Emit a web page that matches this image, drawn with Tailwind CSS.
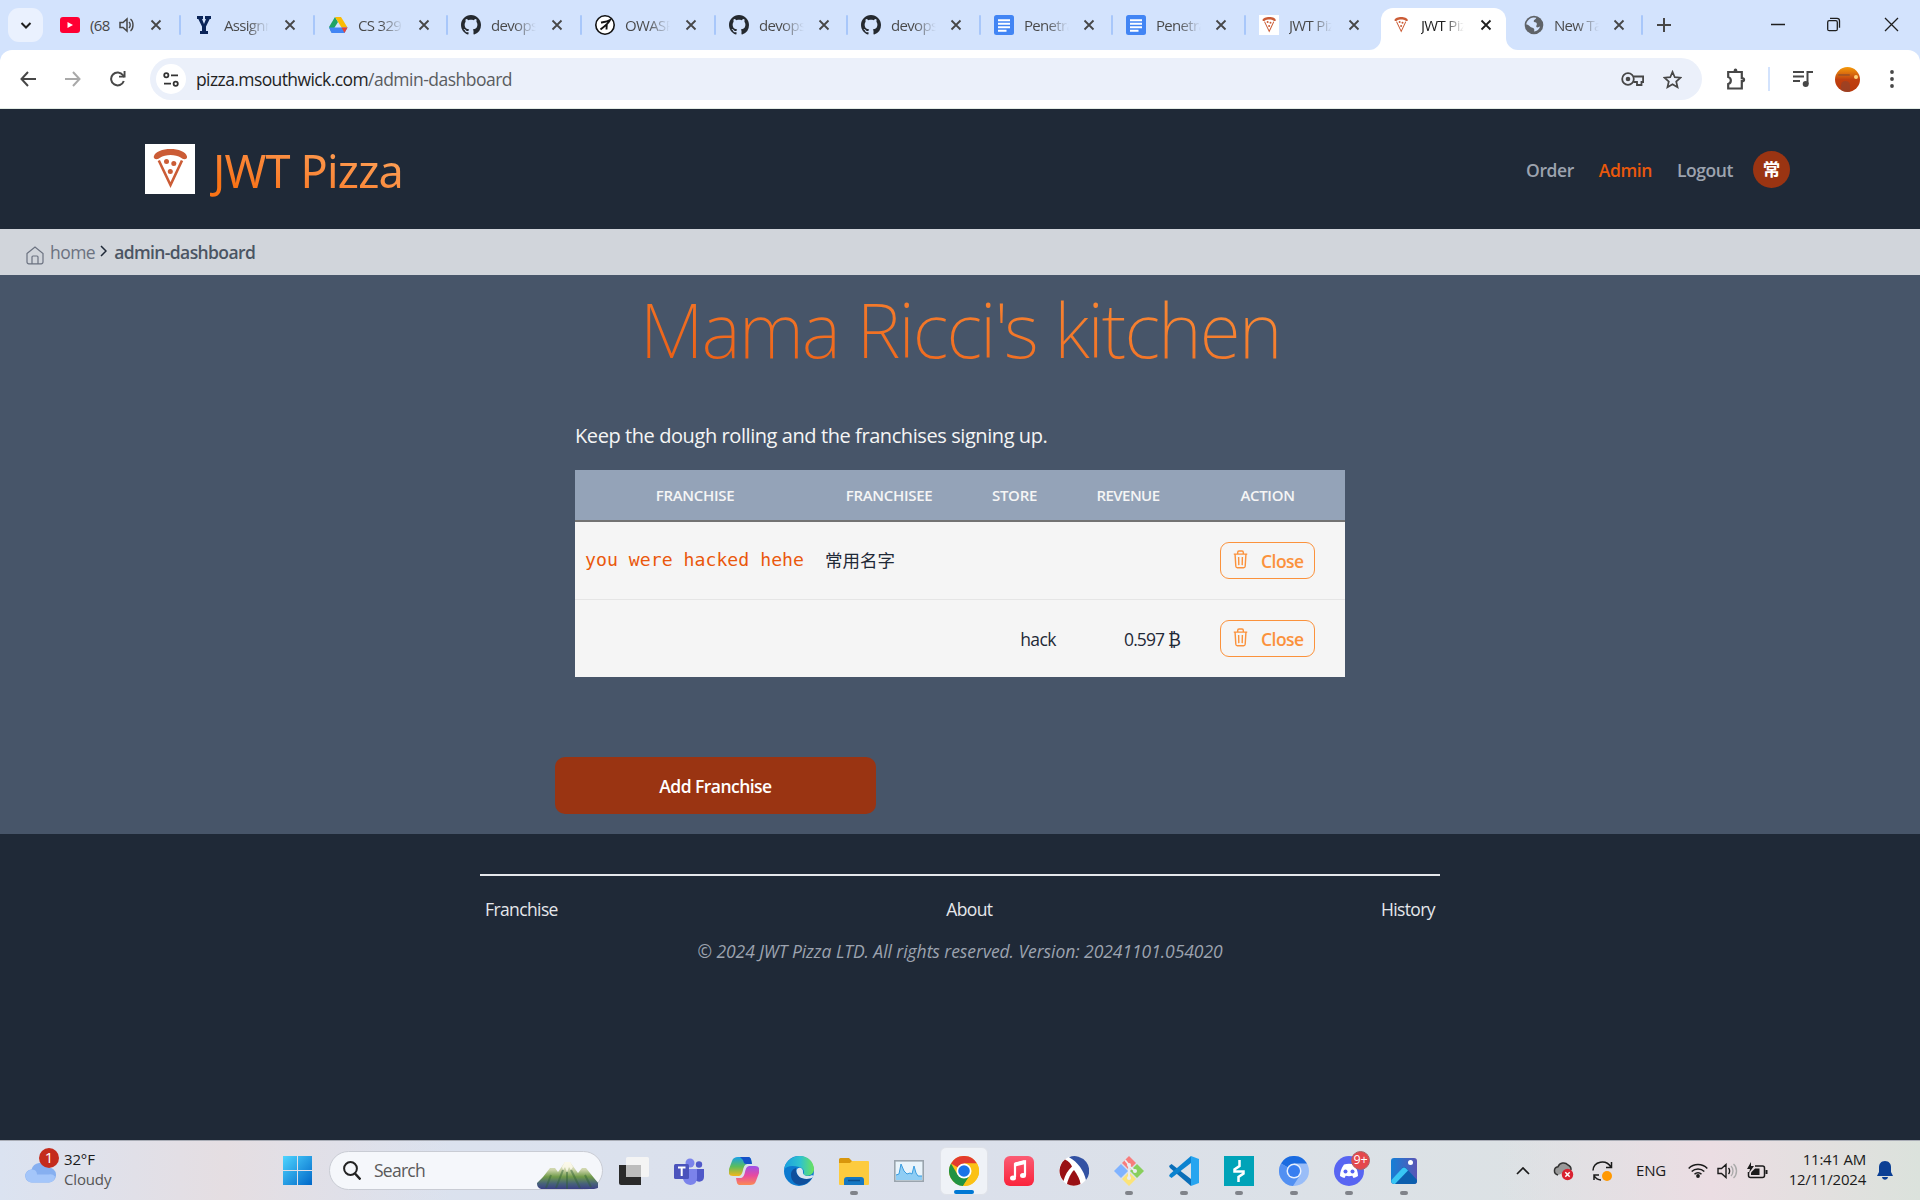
<!DOCTYPE html>
<html lang="en">
<head>
<meta charset="utf-8">
<title>JWT Pizza</title>
<script src="https://cdn.jsdelivr.net/npm/@tailwindcss/browser@4"></script>
</head>
<body class="flex h-[1200px] w-[1920px] flex-col overflow-hidden bg-[#1f2937] font-['Open_Sans','Noto_Sans_CJK_SC',sans-serif] text-[17.5px] tracking-[-0.031em]">

<svg class="hidden">
  <symbol id="x" viewBox="0 0 12 12"><path d="M1.5 1.5l9 9M10.5 1.5l-9 9" stroke="currentColor" stroke-width="1.8" fill="none"/></symbol>
  <symbol id="github" viewBox="0 0 16 16"><path fill="#24292f" d="M8 0C3.58 0 0 3.58 0 8c0 3.54 2.29 6.53 5.47 7.59.4.07.55-.17.55-.38 0-.19-.01-.82-.01-1.49-2.01.37-2.53-.49-2.69-.94-.09-.23-.48-.94-.82-1.13-.28-.15-.68-.52-.01-.53.63-.01 1.08.58 1.23.82.72 1.21 1.87.87 2.33.66.07-.52.28-.87.51-1.07-1.78-.2-3.64-.89-3.64-3.95 0-.87.31-1.59.82-2.15-.08-.2-.36-1.02.08-2.12 0 0 .67-.21 2.2.82.64-.18 1.32-.27 2-.27s1.36.09 2 .27c1.53-1.04 2.2-.82 2.2-.82.44 1.1.16 1.92.08 2.12.51.56.82 1.27.82 2.15 0 3.07-1.87 3.75-3.65 3.95.29.25.54.73.54 1.48 0 1.07-.01 1.93-.01 2.2 0 .21.15.46.55.38A8.01 8.01 0 0016 8c0-4.42-3.58-8-8-8z"/></symbol>
  <symbol id="docs" viewBox="0 0 20 20"><rect width="20" height="20" rx="2.5" fill="#4285f4"/><path d="M4 5.2h12M4 8.7h12M4 12.2h12M4 15.7h8.500" stroke="#fff" stroke-width="1.9"/></symbol>
  <symbol id="pizza" viewBox="0 0 50 50"><path d="M8.800 12.500C11 2.500 40 2.500 42 12.500c.5 1.500-1 2.700-2.500 2.700-1.500 0-2.500-.7-3.500-1.400-5.500-3.600-15.500-3.600-21 0-1 .7-2 1.400-3.500 1.400-1.500 0-3.200-1.200-2.700-2.700z" fill="#cb5c36"/><path d="M13.800 16.500L25.500 41 37 16.500" fill="none" stroke="#cb5c36" stroke-width="2.600"/><circle cx="21.500" cy="17.500" r="2.500" fill="#cb5c36"/><circle cx="28.800" cy="19.500" r="2.500" fill="#cb5c36"/><circle cx="25.300" cy="27.500" r="2.500" fill="#cb5c36"/></symbol>
  <symbol id="trash" viewBox="0 0 16 20"><g fill="none" stroke="#fb923c" stroke-width="1.500"><path d="M.8 4.300h14.400M5 4.300V2.400c0-.8.600-1.400 1.400-1.400h3.200c.8 0 1.400.6 1.400 1.400v1.900M2.200 4.300l.8 12.900c.1.900.7 1.600 1.600 1.600h6.800c.9 0 1.500-.7 1.600-1.600l.8-12.900M6 7.300l.2 8.700M10 7.300l-.2 8.700"/></g></symbol>
</svg>

<!-- Tab strip -->
<div class="flex h-[50px] shrink-0 items-start bg-[#d3e3fd] text-[15px] tracking-[-0.045em] text-[#474747]">
  <div class="mt-2 ml-2 flex h-[34px] w-[35px] shrink-0 items-center justify-center rounded-[11px] bg-[#eaf1fe]">
    <svg class="h-[9px] w-3" viewBox="0 0 12 9"><path d="M1.500 2L6 6.500 10.500 2" fill="none" stroke="#1f1f1f" stroke-width="2"/></svg>
  </div>
  <div class="ml-[5px] flex">
    <div class="relative flex h-[50px] w-[133px] items-center pl-3">
      <svg class="mr-[10px] size-5" viewBox="0 0 20 20"><rect y="2" width="20" height="16" rx="3" fill="#f03"/><path d="M7.500 7v6l5.500-3z" fill="#fff"/></svg>
      <span class="w-[21px] overflow-hidden whitespace-nowrap">(68</span>
      <svg class="ml-[8px] h-[16px] w-[15px]" viewBox="0 0 15 16"><path d="M1 5.500h3L8 2v12L4 10.500H1z" fill="none" stroke="#474747" stroke-width="1.500"/><path d="M10 5c1.600 1.500 1.600 4.500 0 6M11.500 2c3.300 2.500 3.300 9.500 0 12" fill="none" stroke="#474747" stroke-width="1.400"/></svg>
      <svg class="ml-[16px] size-3"><use href="#x"/></svg>
      <i class="absolute right-0 top-[15px] h-5 w-[2px] rounded bg-[#a8c7fa]"></i>
    </div>
    <div class="relative flex h-[50px] w-[134px] items-center pl-[13px]">
      <span class="mr-[10px] flex w-5 justify-center"><svg class="h-5 w-[14px]" viewBox="0 0 14 20"><path d="M0 1h6v3H5l2 5 2-5H8V1h6v3h-1.300L9 11.500V16h2v3H3v-3h2v-4.500L1.300 4H0z" fill="#0a2458"/></svg></span>
      <span class="w-[45px] overflow-hidden whitespace-nowrap bg-linear-to-r from-[#474747] from-50% to-transparent bg-clip-text text-transparent">Assignm</span>
      <svg class="ml-[15px] size-3"><use href="#x"/></svg>
      <i class="absolute right-0 top-[15px] h-5 w-[2px] rounded bg-[#a8c7fa]"></i>
    </div>
    <div class="relative flex h-[50px] w-[133px] items-center pl-[13px]">
      <svg class="mr-[10px] size-5" viewBox="0 0 20 20"><path d="M7 2L1 12l2.500 5.500L10 7z" fill="#1fa463"/><path d="M7 2h6L19.500 12.500H13.500z" fill="#fbbc04"/><path d="M1 12.500h18.500L16.500 18H3.500z" fill="#4285f4"/><path d="M13.500 12.500h6L16.500 18z" fill="#ea4335"/></svg>
      <span class="w-[45px] overflow-hidden whitespace-nowrap bg-linear-to-r from-[#474747] from-50% to-transparent bg-clip-text text-transparent">CS 329 </span>
      <svg class="ml-[15px] size-3"><use href="#x"/></svg>
      <i class="absolute right-0 top-[15px] h-5 w-[2px] rounded bg-[#a8c7fa]"></i>
    </div>
    <div class="relative flex h-[50px] w-[134px] items-center pl-[13px]">
      <svg class="mr-[10px] size-5"><use href="#github"/></svg>
      <span class="w-[45px] overflow-hidden whitespace-nowrap bg-linear-to-r from-[#474747] from-50% to-transparent bg-clip-text text-transparent">devops-</span>
      <svg class="ml-[15px] size-3"><use href="#x"/></svg>
      <i class="absolute right-0 top-[15px] h-5 w-[2px] rounded bg-[#a8c7fa]"></i>
    </div>
    <div class="relative flex h-[50px] w-[134px] items-center pl-[13px]">
      <svg class="mr-[10px] size-5" viewBox="0 0 20 20"><circle cx="10" cy="10" r="9.200" fill="#fff" stroke="#111" stroke-width="1.600"/><path d="M6 7.500c3-.5 6-.5 9-2.500-1 3-5 6-9.500 9.500M11.800 8.500l-.3 6" fill="none" stroke="#111" stroke-width="1.900"/></svg>
      <span class="w-[45px] overflow-hidden whitespace-nowrap bg-linear-to-r from-[#474747] from-50% to-transparent bg-clip-text text-transparent">OWASP</span>
      <svg class="ml-[15px] size-3"><use href="#x"/></svg>
      <i class="absolute right-0 top-[15px] h-5 w-[2px] rounded bg-[#a8c7fa]"></i>
    </div>
    <div class="relative flex h-[50px] w-[132px] items-center pl-[13px]">
      <svg class="mr-[10px] size-5"><use href="#github"/></svg>
      <span class="w-[45px] overflow-hidden whitespace-nowrap bg-linear-to-r from-[#474747] from-50% to-transparent bg-clip-text text-transparent">devops-</span>
      <svg class="ml-[14px] size-3"><use href="#x"/></svg>
      <i class="absolute right-0 top-[15px] h-5 w-[2px] rounded bg-[#a8c7fa]"></i>
    </div>
    <div class="relative flex h-[50px] w-[133px] items-center pl-[13px]">
      <svg class="mr-[10px] size-5"><use href="#github"/></svg>
      <span class="w-[45px] overflow-hidden whitespace-nowrap bg-linear-to-r from-[#474747] from-50% to-transparent bg-clip-text text-transparent">devops-</span>
      <svg class="ml-[14px] size-3"><use href="#x"/></svg>
      <i class="absolute right-0 top-[15px] h-5 w-[2px] rounded bg-[#a8c7fa]"></i>
    </div>
    <div class="relative flex h-[50px] w-[132px] items-center pl-[13px]">
      <svg class="mr-[10px] size-5 shrink-0" ><use href="#docs"/></svg>
      <span class="w-[45px] overflow-hidden whitespace-nowrap bg-linear-to-r from-[#474747] from-50% to-transparent bg-clip-text text-transparent">Penetra</span>
      <svg class="ml-[14px] size-3"><use href="#x"/></svg>
      <i class="absolute right-0 top-[15px] h-5 w-[2px] rounded bg-[#a8c7fa]"></i>
    </div>
    <div class="relative flex h-[50px] w-[133px] items-center pl-[13px]">
      <svg class="mr-[10px] size-5 shrink-0"><use href="#docs"/></svg>
      <span class="w-[45px] overflow-hidden whitespace-nowrap bg-linear-to-r from-[#474747] from-50% to-transparent bg-clip-text text-transparent">Penetra</span>
      <svg class="ml-[14px] size-3"><use href="#x"/></svg>
      <i class="absolute right-0 top-[15px] h-5 w-[2px] rounded bg-[#a8c7fa]"></i>
    </div>
    <div class="relative flex h-[50px] w-[135px] items-center pl-[13px]">
      <svg class="mr-[10px] size-5 bg-white"><use href="#pizza"/></svg>
      <span class="w-[45px] overflow-hidden whitespace-nowrap bg-linear-to-r from-[#474747] from-50% to-transparent to-95% bg-clip-text text-transparent">JWT Piz</span>
      <svg class="ml-[14px] size-3"><use href="#x"/></svg>
    </div>
    <div class="relative mt-2 flex h-[42px] w-[125px] items-center rounded-t-[12px] bg-white pb-2 pl-[10px] text-[#1f1f1f]">
      <svg class="absolute -left-3 bottom-0 size-3" viewBox="0 0 12 12"><path d="M12 0v12H0A12 12 0 0012 0z" fill="#fff"/></svg>
      <svg class="absolute -right-3 bottom-0 size-3" viewBox="0 0 12 12"><path d="M0 0v12h12A12 12 0 010 0z" fill="#fff"/></svg>
      <svg class="mr-[10px] size-5"><use href="#pizza"/></svg>
      <span class="w-[45px] overflow-hidden whitespace-nowrap bg-linear-to-r from-[#1f1f1f] from-50% to-transparent to-95% bg-clip-text text-transparent">JWT Piz</span>
      <svg class="ml-[14px] size-3"><use href="#x"/></svg>
    </div>
    <div class="relative flex h-[50px] w-[137px] items-center pl-[18px]">
      <svg class="mr-[10px] size-5" viewBox="0 0 20 20"><circle cx="10" cy="10" r="9.300" fill="#5f6368"/><path d="M9.500 2.500l2.800.2c-.3 2-2.300 1.600-2.600 3.300-.2 1.500 2.300.8 3 2.200.8 1.500-1 2.300-.3 3.700.6 1 2.400.3 3.800-.6-.8 3-3.200 5-6.200 5.200 1-2.300-.2-3.500-2.200-4C5.500 12 5 9.500 2.300 9.500 2.500 6 5.500 3 9.500 2.500z" fill="#d3e3fd"/></svg>
      <span class="w-[45px] overflow-hidden whitespace-nowrap bg-linear-to-r from-[#474747] from-50% to-transparent bg-clip-text text-transparent">New Tab</span>
      <svg class="ml-[14px] size-3"><use href="#x"/></svg>
      <i class="absolute right-0 top-[15px] h-5 w-[2px] rounded bg-[#a8c7fa]"></i>
    </div>
  </div>
  <svg class="mt-[18px] ml-[14px] size-[14px]" viewBox="0 0 14 14"><path d="M7 0v14M0 7h14" stroke="#474747" stroke-width="2"/></svg>
  <svg class="mt-[17px] ml-auto mr-[21px] h-[15px] w-[128px]" viewBox="0 0 128 15"><g fill="none" stroke="#1f1f1f" stroke-width="1.300"><path d="M0 7.500h14M114 1l13 13M127 1l-13 13"/><rect x="56.700" y="3.700" width="9.600" height="10" rx="1.500"/><path d="M59 1.300h7a2.500 2.500 0 012.500 2.500v7"/></g></svg>
</div>

<!-- Toolbar -->
<div class="h-[59px] shrink-0 bg-[#d3e3fd]">
  <div class="flex h-[59px] items-center rounded-t-[12px] border-b border-[#e2ebe4] bg-white pl-5">
    <svg class="size-4" viewBox="0 0 16 16"><path d="M8 1L1.500 8 8 15M1.500 8H16" fill="none" stroke="#474747" stroke-width="2"/></svg>
    <svg class="ml-[29px] size-4" viewBox="0 0 16 16"><path d="M8 1l6.500 7L8 15M14.500 8H0" fill="none" stroke="#a9a9a9" stroke-width="2"/></svg>
    <svg class="ml-[29px] size-4" viewBox="0 0 16 16"><path d="M13.800 10A6.500 6.500 0 1113 4.200L14.500 6" fill="none" stroke="#474747" stroke-width="2"/><path d="M15.500 0v6.500H9V4.700h4.600V0z" fill="#474747"/></svg>
    <div class="ml-6 flex h-[42px] w-[1552px] items-center rounded-full bg-[#ebf0fa] pl-[6px]">
      <span class="flex size-[30px] items-center justify-center rounded-full bg-white"><svg class="h-[15px] w-4" viewBox="0 0 16 15"><g fill="none" stroke="#333" stroke-width="1.800"><circle cx="3.300" cy="3.300" r="2.100"/><path d="M8 3.300h7M1 11.700h7"/><circle cx="12.700" cy="11.700" r="2.100"/></g></svg></span>
      <span class="ml-[10px] text-[#1f1f1f] tracking-[-0.034em]">pizza.msouthwick.com<span class="text-[#5a5c60] tracking-[-0.029em]">/admin-dashboard</span></span>
      <svg class="ml-auto h-4 w-[23px]" viewBox="0 0 23 16"><circle cx="7" cy="8" r="5.800" fill="none" stroke="#474747" stroke-width="1.800"/><circle cx="7" cy="8" r="2.300" fill="#474747"/><path d="M12.500 5.500h9.600v5.500h-1.600v3h-4.500v-3H12.500" fill="none" stroke="#474747" stroke-width="1.800"/></svg>
      <svg class="ml-[19px] mr-5 h-[19px] w-[19px]" viewBox="0 0 20 20"><path d="M10 2l2.400 5.600 6.100.5-4.600 4 1.400 6L10 14.900 4.700 18.100l1.400-6-4.600-4 6.100-.5z" fill="none" stroke="#474747" stroke-width="1.800"/></svg>
    </div>
    <svg class="ml-6 h-[22px] w-5" viewBox="0 0 20 22"><path d="M2.200 4h5.500l1-.200C8.700 1 10.300 1 10.300 3.800l1 .2h4.500v6.200c3 0 3 3 0 3v7.300H2.200v-4.500c3.500-1 3.500-6 0-7z" fill="none" stroke="#474747" stroke-width="2.200"/></svg>
    <i class="ml-[22px] h-6 w-[2px] bg-[#d3e3fd]"></i>
    <svg class="ml-[23px] h-[18px] w-5" viewBox="0 0 20 18"><path d="M0 2h11M0 6.500h11M0 11h7M14.500 14V2H20" fill="none" stroke="#474747" stroke-width="2"/><circle cx="12.700" cy="14" r="3" fill="#474747"/></svg>
    <span class="relative ml-[22px] size-[25px] overflow-hidden rounded-full bg-linear-to-b from-[#f59a08] via-[#c0400f] to-[#b8380c]"><i class="absolute top-[7px] left-[3px] h-[2px] w-[12px] rounded bg-[#a85420]"></i><i class="absolute top-[8px] right-[2px] size-[4px] rounded-full bg-[#ffd27a]"></i><i class="absolute bottom-0 left-[6px] h-[11px] w-[9px] rounded-t-full bg-[#8a4430]/60"></i></span>
    <svg class="ml-[30px] h-[18px] w-1" viewBox="0 0 4 18"><g fill="#474747"><circle cx="2" cy="2" r="1.900"/><circle cx="2" cy="9" r="1.900"/><circle cx="2" cy="16" r="1.900"/></g></svg>
  </div>
</div>

<!-- Site header -->
<header class="flex h-[120px] shrink-0 items-center bg-[#1f2937] pl-[145px] pr-[130px] text-[#9ca3af]">
  <svg class="size-[50px] bg-white"><use href="#pizza"/></svg>
  <span class="ml-[15px] mt-[3px] bg-linear-to-tr from-[#f97316] from-20% to-[#fdac64] bg-clip-text pr-1 font-['Noto_Sans'] pl-[3px] text-[45px] leading-[60px] font-normal tracking-[-0.018em] text-transparent">JWT Pizza</span>
  <nav class="ml-auto flex items-center gap-[25px] pt-[3px] font-semibold tracking-[-0.024em]">
    <a>Order</a><a class="text-[#ea580c]">Admin</a><a>Logout</a>
  </nav>
  <span class="ml-[20px] flex size-[37px] items-center justify-center rounded-full bg-[#9a3412] text-[17.5px] font-bold tracking-normal text-white">常</span>
</header>

<nav class="flex h-[46px] shrink-0 items-center bg-[#d1d5db] pl-[26px] text-[#6b7280]">
  <svg class="mt-[6px] h-[19px] w-[18px]" viewBox="0 0 18 19"><path d="M1 7.500L9 1l8 6.500V16a1.800 1.800 0 01-1.800 1.800H2.800A1.800 1.800 0 011 16zM6 17.800V11a1 1 0 011-1h4a1 1 0 011 1v6.800" fill="none" stroke="#6b7280" stroke-width="1.200"/></svg>
  <span class="ml-[6px]">home</span>
  <svg class="mb-[2px] ml-[5px] h-3 w-[7px]" viewBox="0 0 7 12"><path d="M1 1l5 5-5 5" fill="none" stroke="#1f2937" stroke-width="1.500"/></svg>
  <span class="ml-[7px] font-semibold tracking-[-0.035em] text-[#4b5563]">admin-dashboard</span>
</nav>

<!-- Dashboard -->
<main class="flex h-[559px] shrink-0 flex-col bg-[#475569]">
  <h1 class="mx-auto mt-[6px] bg-linear-to-tr from-[#ea580c] to-[#fb923c] bg-clip-text pb-px font-['Noto_Sans'] text-[75px] leading-[96px] font-extralight tracking-[-0.026em] text-transparent">Mama Ricci's kitchen</h1>
  <section class="ml-[575px] w-[770px]">
    <p class="mt-[43px] text-[20px] leading-[30px] tracking-[-0.021em] text-neutral-100">Keep the dough rolling and the franchises signing up.</p>
    <div class="mt-[19px] grid h-[52px] grid-cols-[240px_148px_103px_124px_155px] items-center border-b-2 border-[#737373] bg-[#94a3b8] text-center text-[15px] font-semibold tracking-[-0.02em] text-neutral-100">
      <span>FRANCHISE</span><span>FRANCHISEE</span><span>STORE</span><span class="tracking-[-0.037em]">REVENUE</span><span>ACTION</span>
    </div>
    <div class="grid h-[78px] grid-cols-[240px_148px_103px_124px_155px] items-center border-b border-[#e5e5e5] bg-[#f5f5f5] text-[#1f2937]">
      <span class="pl-[10px] pb-[2px] font-['DejaVu_Sans_Mono'] text-[18.2px] tracking-normal whitespace-nowrap text-[#ea580c]">you were hacked hehe</span>
      <span class="pl-[10px] font-['Noto_Sans_CJK_SC'] tracking-normal">常用名字</span><span></span><span></span>
      <button class="mx-auto flex h-[37px] w-[95px] items-center rounded-[9px] border border-[#fb923c] pl-[12px] font-semibold text-[#fb923c]"><svg class="mb-[3px] h-[19px] w-[15px]"><use href="#trash"/></svg><span class="mt-[2px] ml-[13px]">Close</span></button>
    </div>
    <div class="grid h-[77px] grid-cols-[240px_148px_103px_124px_155px] items-center bg-[#f5f5f5] text-[#1f2937]">
      <span></span><span></span><span class="pt-[2px] pr-[10px] text-right">hack</span><span class="pt-[2px] pr-[10px] text-right tracking-[-0.05em]">0.597 ₿</span>
      <button class="mx-auto flex h-[37px] w-[95px] items-center rounded-[9px] border border-[#fb923c] pl-[12px] font-semibold text-[#fb923c]"><svg class="mb-[3px] h-[19px] w-[15px]"><use href="#trash"/></svg><span class="mt-[2px] ml-[13px]">Close</span></button>
    </div>
  </section>
  <button class="mt-20 ml-[555px] flex h-[57px] w-[321px] items-center justify-center rounded-[10px] bg-[#9a3412] pt-[2px] font-semibold text-white">Add Franchise</button>
</main>

<footer class="flex h-[306px] shrink-0 flex-col items-center bg-[#1f2937]">
  <div class="mt-10 flex w-[960px] justify-between border-t-2 border-[#e5e7eb] px-[5px] pt-5 leading-[26px] tracking-[-0.035em] text-[#e5e7eb]">
    <a>Franchise</a><a>About</a><a>History</a>
  </div>
  <p class="mt-4 leading-[26px] tracking-[-0.003em] text-[#9ca3af] italic">© 2024 JWT Pizza LTD. All rights reserved. Version: 20241101.054020</p>
</footer>

<!-- Taskbar -->
<div class="flex h-[60px] shrink-0 items-center border-t border-[#a9adb6] bg-linear-to-r from-[#dbe3f1] via-[#dbe0eb] to-[#dde3e0] text-[15px] tracking-[-0.01em] text-[#1b1b1b]">
 <div class="flex h-full w-[1500px] items-center bg-linear-to-r from-[#dbe3f1] from-0% via-[#e5dee2] via-15% to-transparent to-30%">
  <div class="relative ml-[25px] h-10 w-[31px]">
    <svg class="absolute top-[8px] left-0 h-[26px] w-[31px]" viewBox="0 0 31 26"><path d="M7 23.500a6.500 6.500 0 01-.5-13A9 9 0 0123 8.500a7.500 7.500 0 011 15z" fill="#86aff0"/><path d="M7 23.500a6.500 6.500 0 010-13c4 0 5 3 5 5h12a6 6 0 016 2 6 6 0 01-6 6z" fill="#a4c6fa"/></svg>
    <span class="absolute -top-[3px] left-[14px] flex size-5 items-center justify-center rounded-full bg-[#c42b1c] text-[15px] text-white">1</span>
  </div>
  <div class="ml-2 w-[210px] pb-[3px] leading-[20.500px]"><div>32°F</div><div class="text-[#555]">Cloudy</div></div>
  <svg class="ml-[9px] size-[29px]" viewBox="0 0 29 29"><defs><linearGradient id="win" x2="1" y2="1"><stop stop-color="#4fd5ff"/><stop offset="1" stop-color="#0067c8"/></linearGradient></defs><path d="M0 0h14v14H0zM15 0h14v14H15zM0 15h14v14H0zM15 15h14v14H15z" fill="url(#win)"/></svg>
  <div class="ml-[17px] flex h-[39px] w-[274px] items-center rounded-full border border-[#c9ccd4] bg-[#f5f7fb] pl-[13px] text-[17.500px] tracking-[-0.042em] text-[#5a5a5a]">
    <svg class="h-[19px] w-[18px]" viewBox="0 0 18 19"><circle cx="7.500" cy="7.500" r="6.400" fill="none" stroke="#222" stroke-width="2"/><path d="M12 12.500l5.500 6" stroke="#222" stroke-width="2.500"/></svg>
    <span class="ml-[13px]">Search</span>
    <svg class="mt-[9px] ml-auto mr-[4px] h-[28px] w-[61px]" viewBox="0 0 61 28"><defs><linearGradient id="mt" x2="0" y2="1"><stop stop-color="#efecd6"/><stop offset=".3" stop-color="#c9d2a6"/><stop offset=".55" stop-color="#6f9a48"/><stop offset=".8" stop-color="#47627a"/><stop offset="1" stop-color="#3b3f86"/></linearGradient></defs><path d="M0 22L6 16 13 7h5l3 4 7-10h5l8 11 4-5h4l8 10 6 7c0 2-3 4-6 4H6c-4 0-6-2-6-6z" fill="url(#mt)"/><path d="M26 9L19 27M30 11v17M34 9l9 18M14 14L9 27M48 14l6 12" stroke="#2e5f35" stroke-opacity=".45" stroke-width="2"/><path d="M28 1h5l3 5-2 3-2-3-2 5-2-5-2 3-1-3z" fill="#fffdf0" fill-opacity=".8"/></svg>
  </div>
  <div class="ml-[16px] flex items-center gap-[25px]">
    <svg class="size-[30px]" viewBox="0 0 30 30"><path d="M0 9h22v20H2a2 2 0 01-2-2z" fill="#2a2a2a"/><rect x="7" y="1" width="23" height="20" rx="1.500" fill="#f4f4f4"/><path d="M7 9h15v12H7z" fill="#bdbdbd"/></svg>
    <svg class="size-[30px]" viewBox="0 0 30 30"><circle cx="16" cy="7" r="4.500" fill="#7b83eb"/><circle cx="25" cy="8.500" r="3.200" fill="#5059c9"/><path d="M20 13h10v8c0 6-8 6-10 1z" fill="#5059c9"/><path d="M9 13h14v9c0 9-12 9-14 1z" fill="#7b83eb"/><rect y="8" width="15" height="15" rx="1.500" fill="#4b53bc"/><path d="M4 11.500h7.500M7.700 11.500V20" stroke="#fff" stroke-width="2"/></svg>
    <svg class="size-[30px]" viewBox="0 0 30 30"><defs><linearGradient id="cp" x2="0" y2="1"><stop stop-color="#18a0e8"/><stop offset=".5" stop-color="#5bbd5c"/><stop offset="1" stop-color="#f3b61c"/></linearGradient><linearGradient id="cq" x2="0" y2="1"><stop stop-color="#9d50e8"/><stop offset=".5" stop-color="#e84aa0"/><stop offset="1" stop-color="#fb8a52"/></linearGradient></defs><path d="M9 1h10c3 0 3 2 4 7h-4c-3 0-4 2-5 6-1 4-2 6-5 6H4c-4 0-5-3-4-7L3 5c1-3 3-4 6-4z" fill="url(#cp)"/><path d="M11 1h8c3 0 3 2 4 7h-5c-3 0-3-1-4-4z" fill="#1551c8"/><path d="M21 29H11c-3 0-3-2-4-7h4c3 0 4-2 5-6 1-4 2-6 5-6h5c4 0 5 3 4 7l-3 8c-1 3-3 4-6 4z" fill="url(#cq)"/></svg>
    <svg class="size-[30px]" viewBox="0 0 30 30"><defs><linearGradient id="ed" x2="1"><stop stop-color="#1a9fe0"/><stop offset=".55" stop-color="#2fc3cd"/><stop offset="1" stop-color="#6be35a"/></linearGradient></defs><circle cx="15" cy="15" r="15" fill="#0c79cf"/><path d="M0 14C2-4 29-5 30 13c0 6-6 8-11 6 2-3 1-7-4-8C8 9 2 10 0 14z" fill="url(#ed)"/><path d="M28 22c-7 11-21 8-21-3 0-4 2-6 5-7-1 8 7 13 16 10z" fill="#0f4f9c"/><path d="M12.500 14c2-4 7-2 6.500 2-.5 3 3 5 8 3.500 2-.5 3 0 1.500 2C22 25 12 22 12.500 14z" fill="#dce4f0"/></svg>
    <span class="relative size-[30px]"><svg class="size-[30px]" viewBox="0 0 30 30"><path d="M0 3.500A1.500 1.500 0 011.500 2H10l3 3v6H0z" fill="#d8960c"/><path d="M0 7h11l2-2h16a1 1 0 011 1v22a1 1 0 01-1 1H1a1 1 0 01-1-1z" fill="#fdcb3e"/><path d="M5 29v-5a3 3 0 013-3h14a3 3 0 013 3v5z" fill="#1577c2"/><path d="M9 24.500h12" stroke="#0c4f8c" stroke-width="1.500"/></svg><i class="absolute -bottom-[9px] left-[11px] h-1 w-2 rounded-full bg-[#80838a]"></i></span>
    <svg class="size-[30px]" viewBox="0 0 30 30"><rect x=".8" y="4.800" width="28.400" height="20.400" fill="#e9f4fb" stroke="#9aa4ad" stroke-width="1.600"/><path d="M2 24v-5l3-1 2-10 3 7 3 3 3-1 2 1 2-8 2 7 2 3 4 0v4z" fill="#8fcdf4"/><path d="M2 19l3-1 2-10 3 7 3 3 3-1 2 1 2-8 2 7 2 3h4" fill="none" stroke="#3a9de0"/></svg>
    <span class="relative -mx-[9px] flex h-12 w-12 items-center justify-center rounded-md border border-[#dfe2e9] bg-[#eff2f7]"><svg class="size-[30px]" viewBox="0 0 30 30"><circle cx="15" cy="15" r="15" fill="#fbc116"/><path d="M15 15L2 7.500A15 15 0 0128 7.500H15z" fill="#e33b2e"/><path d="M2 7.500A15 15 0 0014 30l7.500-11.500L15 15 8.500 18.500z" fill="#229342"/><path d="M15 7.500h13A15 15 0 0114 30l7.500-11.500z" fill="#fbc116"/><circle cx="15" cy="15" r="7.500" fill="#fff"/><circle cx="15" cy="15" r="5.800" fill="#1a73e8"/></svg><i class="absolute bottom-0 left-[13px] h-1 w-5 rounded-full bg-[#0078d4]"></i></span>
    <svg class="size-[30px]" viewBox="0 0 30 30"><defs><linearGradient id="mu" x2="0" y2="1"><stop stop-color="#fb5c74"/><stop offset="1" stop-color="#fa233b"/></linearGradient></defs><rect width="30" height="30" rx="6" fill="url(#mu)"/><path d="M11 21V8l10-2.500V19" fill="none" stroke="#fff" stroke-width="2.200"/><path d="M11 8.500L21 6" stroke="#fff" stroke-width="4"/><ellipse cx="9" cy="22" rx="3" ry="2.500" fill="#fff"/><ellipse cx="19" cy="19.500" rx="3" ry="2.500" fill="#fff"/></svg>
    <svg class="size-[30px]" viewBox="0 0 30 30"><circle cx="15" cy="15" r="14.700" fill="#fff"/><path d="M10 1.200A14.700 14.700 0 0127 24C25 15 19 6 10 1.200z" fill="#3352a3"/><path d="M6 3.500c4 2 6 4.500 7 7C9 14 6 19 4.500 25A14.700 14.700 0 016 3.500z" fill="#991014"/><path d="M15 14c3 4 6 9 6.500 14A15 15 0 018 28c1-5 4-11 7-14z" fill="#991014"/></svg>
    <span class="relative size-[30px]"><svg class="size-[30px]" viewBox="0 0 30 30"><path d="M15 0l7 7-7 7-7-7z" fill="#f87c7c"/><path d="M23 8l7 7-7 7-7-7z" fill="#88cf5c"/><path d="M7 8l7 7-7 7-7-7z" fill="#80b3ff"/><path d="M15 16l7 7-7 7-7-7z" fill="#fbe37a"/><path d="M11 4l4 5v14M15 10l6 5" fill="none" stroke="#e9edf3" stroke-width="1.800"/><circle cx="15" cy="9" r="2" fill="#e9edf3"/><circle cx="21" cy="15" r="2" fill="#e9edf3"/><circle cx="15" cy="22" r="2" fill="#e9edf3"/></svg><i class="absolute -bottom-[9px] left-[11px] h-1 w-2 rounded-full bg-[#80838a]"></i></span>
    <span class="relative size-[30px]"><svg class="size-[30px]" viewBox="0 0 30 30"><path d="M0 10l2.500-2L22 23v7L1 12z" fill="#0a6eb8"/><path d="M0 20l2.500 2L22 7V0L1 18z" fill="#0b83d0"/><path d="M22 0l8 3v24l-8 3z" fill="#27a5f0"/></svg><i class="absolute -bottom-[9px] left-[11px] h-1 w-2 rounded-full bg-[#80838a]"></i></span>
    <span class="relative size-[30px]"><svg class="size-[30px]" viewBox="0 0 30 30"><path d="M0 0h30v30H0z" fill="#00a3b8"/><path d="M15.500 4v6l-5 3.500v2h9v2l-5 3.500V26" fill="none" stroke="#fff" stroke-width="2.500"/></svg><i class="absolute -bottom-[9px] left-[11px] h-1 w-2 rounded-full bg-[#80838a]"></i></span>
    <span class="relative size-[30px]"><svg class="size-[30px]" viewBox="0 0 30 30"><circle cx="15" cy="15" r="15" fill="#99bdf8"/><path d="M15 15L2 7.500A15 15 0 0128 7.500H15z" fill="#1a6be0"/><path d="M2 7.500A15 15 0 0014 30l7.500-11.500L15 15z" fill="#5290f2"/><circle cx="15" cy="15" r="7.500" fill="#e6effd"/><circle cx="15" cy="15" r="6" fill="#387ef0"/></svg><i class="absolute -bottom-[9px] left-[11px] h-1 w-2 rounded-full bg-[#80838a]"></i></span>
    <span class="relative size-[30px]"><svg class="size-[30px]" viewBox="0 0 30 30"><circle cx="15" cy="15" r="15" fill="#5865f2"/><path d="M10 8.500c3-1 7-1 10 0 3 4 4 8 4 11.500-1.500 1-3 1.700-4.500 2l-1.200-2.200c-2 .5-4.600.5-6.600 0L10.500 22c-1.500-.3-3-1-4.500-2 0-3.500 1-7.500 4-11.500z" fill="#fff"/><circle cx="11.500" cy="15.500" r="2" fill="#5865f2"/><circle cx="18.500" cy="15.500" r="2" fill="#5865f2"/></svg><b class="absolute -top-[5px] left-[17px] flex size-[19px] items-center justify-center rounded-full border border-[#a66] bg-[#e5484d] text-[12.5px] font-normal text-white">9+</b><i class="absolute -bottom-[9px] left-[11px] h-1 w-2 rounded-full bg-[#80838a]"></i></span>
    <span class="relative size-[30px]"><svg class="size-[30px]" viewBox="0 0 30 30"><defs><linearGradient id="ph" x2="1"><stop stop-color="#147fd6"/><stop offset="1" stop-color="#5b55b5"/></linearGradient></defs><rect x="2" y="2" width="26" height="26" rx="3" fill="url(#ph)"/><path d="M3 26L13 12a3 3 0 014 0l11 12v1a3 3 0 01-3 3H5z" fill="#0d5fae"/><path d="M2.500 24L13 12.500a3 3 0 014 0l2 2L6 28H5a3 3 0 01-2.500-4z" fill="#38c6f4"/><circle cx="21.500" cy="6.500" r="2.500" fill="#fff"/></svg><i class="absolute -bottom-[9px] left-[11px] h-1 w-2 rounded-full bg-[#80838a]"></i></span>
  </div>
 </div>
 <div class="flex h-full flex-1 items-center bg-linear-to-r from-transparent via-[#ebdde3] to-[#dbe2dc]">
  <svg class="ml-4 h-2 w-[14px]" viewBox="0 0 14 8"><path d="M1 7l6-6 6 6" fill="none" stroke="#1b1b1b" stroke-width="1.700"/></svg>
  <svg class="ml-[23px] h-5 w-[21px]" viewBox="0 0 21 20"><path d="M5 14a4.200 4.200 0 010-8.300A6 6 0 0115 4a5 5 0 013 5" fill="#999" stroke="#333" stroke-width="1.500"/><circle cx="14.500" cy="13.500" r="5.700" fill="#d92231"/><path d="M12.300 11.300l4.400 4.400M16.700 11.300l-4.400 4.400" stroke="#fff" stroke-width="1.500"/></svg>
  <svg class="ml-[18px] h-5 w-[21px]" viewBox="0 0 21 20"><path d="M1 9.500C1.500 0 14 -2 19 6M19.500 1v5.500H14M2 19v-5h5M2 14.500C4 18 6 19 9 19" fill="none" stroke="#1b1b1b" stroke-width="1.500"/><circle cx="15" cy="15" r="5" fill="#ff9800"/></svg>
  <span class="ml-[23px]">ENG</span>
  <svg class="ml-[22px] h-[15px] w-[20px]" viewBox="0 0 20 15"><g fill="none" stroke="#1b1b1b" stroke-width="1.500"><path d="M.7 5.500a13 13 0 0118.600 0M3.700 8.500a9 9 0 0112.600 0M6.500 11.300a5 5 0 017 0"/></g><circle cx="10" cy="13" r="1.900" fill="#1b1b1b"/></svg>
  <svg class="ml-[9px] h-4 w-[21px]" viewBox="0 0 21 16"><path d="M1 5.500h3.500L9 1.500v13l-4.500-4H1zM11.500 5c1.500 1.500 1.500 4.500 0 6" fill="none" stroke="#1b1b1b" stroke-width="1.400"/><path d="M14 3c2.600 2.500 2.600 7.500 0 10M16.500 1c4 3.500 4 10.500 0 14" fill="none" stroke="#aaa" stroke-width="1.400"/></svg>
  <svg class="ml-[9px] h-[17px] w-[21px]" viewBox="0 0 21 17"><path d="M8 4h7.500a2 2 0 012 2v7.500a2 2 0 01-2 2H3.500a2 2 0 01-2-2V10" fill="none" stroke="#1b1b1b" stroke-width="1.500"/><path d="M8 6.500h4.500v6.500H4V10.500z" fill="#1b1b1b"/><path d="M18.500 8h2v4h-2zM4 0L0 7h3L2 11l5-7H4z" fill="#1b1b1b"/></svg>
  <div class="ml-auto pb-[3px] text-right leading-[20.500px] tracking-[-0.015em]"><div>11:41 AM</div><div>12/11/2024</div></div>
  <svg class="ml-[11px] mr-[27px] h-[19px] w-4" viewBox="0 0 16 19"><path d="M8 0c4 0 6 3 6 6v5l2 4H0l2-4V6c0-3 2-6 6-6zM5 16h6c-.5 3.500-5.500 3.500-6 0z" fill="#0b3f94"/></svg>
 </div>
</div>
</body>
</html>
